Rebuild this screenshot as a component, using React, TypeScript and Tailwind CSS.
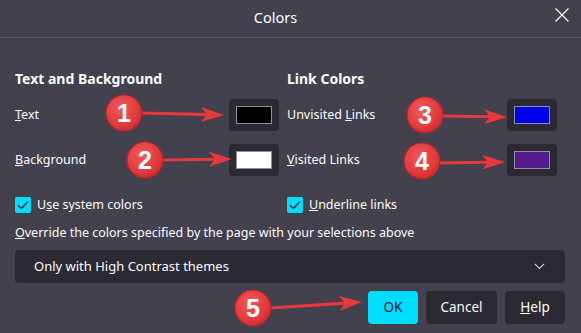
import React from "react";

const font = { fontFamily: '"Noto Sans", "Open Sans", sans-serif' };

const Swatch = ({ color }: { color: string }) => (
  <div className="w-[50px] h-[32px] rounded-[4px] bg-[#2b2a33] flex items-center justify-center">
    <div className="w-[36px] h-[18px] border border-[#8f8f9d]" style={{ background: color }} />
  </div>
);

const Check = () => (
  <div className="w-[16px] h-[16px] rounded-[2px] bg-[#00ddff] flex items-center justify-center">
    <svg width="14" height="14" viewBox="0 0 14 14">
      <path d="M2 7.2 L5.4 10.5 L12 3.5" fill="none" stroke="#2b2a33" strokeWidth="1.4" />
    </svg>
  </div>
);

type Mark = { n: string; cx: number; cy: number; x1: number; y1: number; x2: number; y2: number };

const marks: Mark[] = [
  { n: "1", cx: 124, cy: 113, x1: 141, y1: 113, x2: 224, y2: 115 },
  { n: "2", cx: 145, cy: 160, x1: 162, y1: 160, x2: 232, y2: 159 },
  { n: "3", cx: 425, cy: 115, x1: 442, y1: 116, x2: 507, y2: 117 },
  { n: "4", cx: 422, cy: 161, x1: 439, y1: 163, x2: 505, y2: 162 },
  { n: "5", cx: 253, cy: 308, x1: 270, y1: 308, x2: 362, y2: 302 },
];

const Annotation = ({ m }: { m: Mark }) => {
  const a = Math.atan2(m.y2 - m.y1, m.x2 - m.x1);
  const deg = (a * 180) / Math.PI;
  const len = Math.hypot(m.x2 - m.x1, m.y2 - m.y1);
  return (
    <g>
      <g transform={`translate(${m.x1} ${m.y1}) rotate(${deg})`}>
        <rect x={0} y={-1.6} width={len - 16} height={3.2} fill="#e5393b" />
        <polygon points={`${len},0 ${len - 23},-7.5 ${len - 17},0 ${len - 23},7.5`} fill="#e5393b" />
      </g>
      <circle cx={m.cx} cy={m.cy} r={18} fill="url(#redg)" stroke="#b3262a" strokeWidth={1.2} />
      <text
        x={m.cx}
        y={m.cy + 9}
        textAnchor="middle"
        fontSize="25"
        fontWeight="700"
        fill="#ffffff"
        style={{ fontFamily: '"Liberation Sans", Arial, sans-serif' }}
      >
        {m.n}
      </text>
    </g>
  );
};

export default function App() {
  return (
    <div className="relative w-[581px] h-[333px] bg-[#42414d] text-[#fbfbfe] overflow-hidden" style={font}>
      <div className="h-[38px] border-b border-[#5b5a66] flex items-center relative">
        <div className="flex-1 text-center text-[14.5px] pr-[30px] -mt-[2px]">Colors</div>
        <svg className="absolute left-[555px] top-[8px]" width="14" height="14" viewBox="0 0 14 14">
          <path d="M0.5 0.5 L13.5 13.5 M13.5 0.5 L0.5 13.5" stroke="#fbfbfe" strokeWidth="1.2" />
        </svg>
      </div>

      <div className="pl-[15px] pr-[16px]">
        <div className="grid grid-cols-[264px_270px] gap-x-[8px] mt-[31px]">
          <div className="text-[14px] font-bold leading-[20px]">Text and Background</div>
          <div className="text-[14px] font-bold leading-[20px]">Link Colors</div>

          <div className="flex items-center justify-between h-[32px] mt-[10px] text-[12.5px]">
            <span>
              <u>T</u>ext
            </span>
            <Swatch color="#000000" />
          </div>
          <div className="flex items-center justify-between h-[32px] mt-[10px] text-[12.5px]">
            <span>
              Unvisited <u>L</u>inks
            </span>
            <Swatch color="#0000ee" />
          </div>

          <div className="flex items-center justify-between h-[32px] mt-[13px] text-[12.5px]">
            <span>
              <u>B</u>ackground
            </span>
            <Swatch color="#ffffff" />
          </div>
          <div className="flex items-center justify-between h-[32px] mt-[13px] text-[12.5px]">
            <span>
              <u>V</u>isited Links
            </span>
            <Swatch color="#551a8b" />
          </div>

          <div className="flex items-center gap-[6px] h-[16px] mt-[21px] text-[12.5px]">
            <Check />
            <span>
              U<u>s</u>e system colors
            </span>
          </div>
          <div className="flex items-center gap-[6px] h-[16px] mt-[21px] text-[12.5px]">
            <Check />
            <span>
              <u>U</u>nderline links
            </span>
          </div>
        </div>

        <div className="mt-[11px] text-[12.5px] leading-[18px]">
          <u>O</u>verride the colors specified by the page with your selections above
        </div>

        <div className="mt-[8px] h-[33px] rounded-[4px] bg-[#2b2a33] flex items-center justify-between pl-[19px] pr-[20px] text-[13px]">
          <span>Only with High Contrast themes</span>
          <svg width="11" height="7" viewBox="0 0 11 7">
            <path d="M0.8 0.8 L5.5 5.5 L10.2 0.8" fill="none" stroke="#c8c8cf" strokeWidth="1.2" />
          </svg>
        </div>

        <div className="mt-[8px] flex justify-end gap-[8px] text-[13.5px]">
          <button className="w-[50px] h-[33px] rounded-[4px] bg-[#00ddff] text-[#15141a]">OK</button>
          <button className="w-[71px] h-[33px] rounded-[4px] bg-[#2b2a33]">Cancel</button>
          <button className="w-[60px] h-[33px] rounded-[4px] bg-[#2b2a33]">
            <u>H</u>elp
          </button>
        </div>
      </div>

      <svg className="absolute inset-0 pointer-events-none" width="581" height="333">
        <defs>
          <radialGradient id="redg" cx="40%" cy="35%" r="70%">
            <stop offset="0%" stopColor="#f2585a" />
            <stop offset="70%" stopColor="#e03a3c" />
            <stop offset="100%" stopColor="#c62d30" />
          </radialGradient>
        </defs>
        {marks.map((m) => (
          <Annotation key={m.n} m={m} />
        ))}
      </svg>
    </div>
  );
}
